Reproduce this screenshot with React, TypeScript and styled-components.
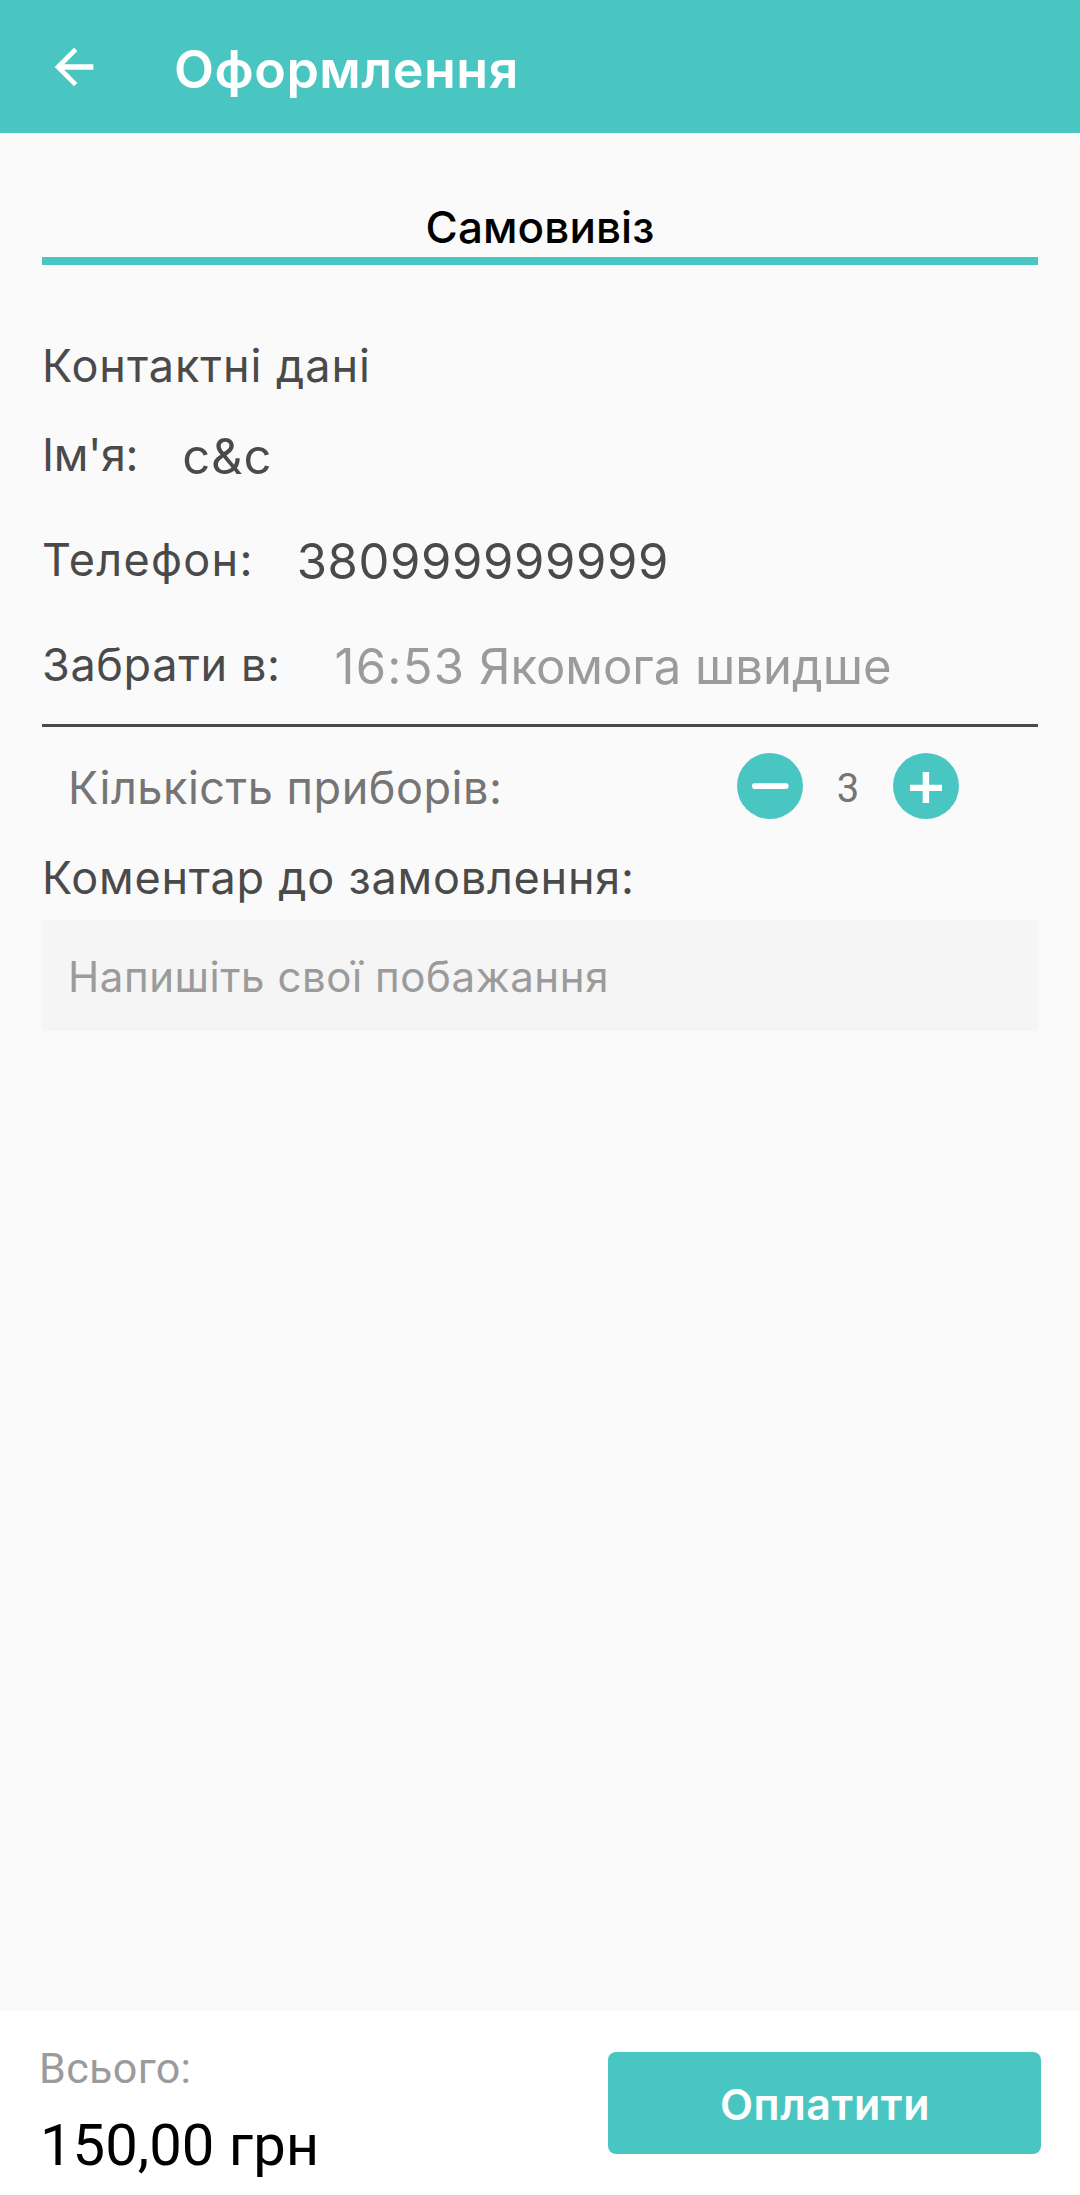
import React, { useState } from 'react';
import styled, { createGlobalStyle } from 'styled-components';

const TEAL = '#4ac6c2';
const INK = '#4a4a4a';
const MUTED = '#9b9b9b';

const GlobalStyle = createGlobalStyle`
  * { box-sizing: border-box; }
  body {
    margin: 0;
    background: #fafafa;
    font-family: Inter, 'Noto Sans', sans-serif;
  }
  button { font: inherit; border: 0; padding: 0; cursor: pointer; }
`;

const Screen = styled.div`
  display: flex;
  flex-direction: column;
  width: 1080px;
  height: 2195px;
  background: #fafafa;
`;

const Header = styled.header`
  display: flex;
  align-items: center;
  gap: 71px;
  height: 133px;
  padding-left: 45px;
  background: ${TEAL};
  color: #fff;
`;

const BackButton = styled.button`
  display: flex;
  width: 58px;
  height: 58px;
  background: none;
  color: #fff;
`;

const Title = styled.h1`
  margin: 0;
  padding-top: 7px;
  font-size: 52px;
  line-height: 64px;
  font-weight: 600;
  letter-spacing: 0.5px;
`;

const Main = styled.main`
  flex: 1;
  display: flex;
  flex-direction: column;
  padding: 0 42px;
`;

const Tab = styled.div`
  display: flex;
  align-items: flex-end;
  justify-content: center;
  height: 132px;
  border-bottom: 8px solid ${TEAL};
  color: #000;
  font-size: 44px;
  line-height: 60px;
  font-weight: 500;
  letter-spacing: 0.1px;
`;

const Heading = styled.h2<{ $top: number; $spacing: number }>`
  margin: ${p => p.$top}px 0 0;
  color: ${INK};
  font-size: 45px;
  line-height: 60px;
  font-weight: 400;
  letter-spacing: ${p => p.$spacing}px;
`;

const Fields = styled.div`
  margin-top: 8px;
  padding-bottom: 5px;
  border-bottom: 3px solid ${INK};
`;

const Field = styled.div<{ $gap: number }>`
  display: flex;
  align-items: center;
  gap: ${p => p.$gap}px;
  height: 105px;
  white-space: nowrap;
`;

const Label = styled.span<{ $spacing: number }>`
  padding-bottom: 3px;
  color: ${INK};
  font-size: 45px;
  line-height: 60px;
  letter-spacing: ${p => p.$spacing}px;
`;

const Value = styled.span<{ $spacing: number; $muted?: boolean }>`
  color: ${p => (p.$muted ? MUTED : INK)};
  font-size: 49px;
  line-height: 60px;
  letter-spacing: ${p => p.$spacing}px;
`;

const Time = styled.span`
  letter-spacing: 1.2px;
`;

const CutleryRow = styled.div`
  display: flex;
  align-items: center;
  justify-content: space-between;
  height: 118px;
  padding: 0 79px 0 26px;
`;

const CutleryLabel = styled.span`
  padding-top: 4px;
  color: #757575;
  font-size: 45px;
  line-height: 60px;
  letter-spacing: 0.53px;
`;

const Stepper = styled.div`
  display: flex;
  align-items: center;
`;

const RoundButton = styled.button`
  display: flex;
  width: 66px;
  height: 66px;
  border-radius: 50%;
  background: ${TEAL};
  color: #fff;
`;

const Count = styled.span`
  width: 90px;
  padding-top: 5px;
  text-align: center;
  color: #757575;
  font-family: Roboto, sans-serif;
  font-size: 40px;
  line-height: 50px;
`;

const CommentBox = styled.textarea`
  display: block;
  width: 100%;
  height: 111px;
  margin-top: 12px;
  padding: 27px 26px 24px;
  border: 0;
  border-radius: 0;
  resize: none;
  overflow: hidden;
  background: #f5f5f5;
  color: ${INK};
  font: 400 42px/60px Inter, 'Noto Sans', sans-serif;
  letter-spacing: 0.55px;
  &::placeholder { color: ${MUTED}; opacity: 1; }
`;

const Footer = styled.footer`
  display: flex;
  justify-content: space-between;
  align-items: flex-start;
  height: 184px;
  padding: 0 39px;
  background: #fff;
`;

const Totals = styled.div`
  display: flex;
  flex-direction: column;
  gap: 17px;
  padding-top: 32px;
  font-family: Roboto, sans-serif;
`;

const TotalLabel = styled.span`
  color: ${MUTED};
  font-size: 43px;
  line-height: 50px;
  letter-spacing: 0.38px;
`;

const TotalAmount = styled.span`
  padding-left: 1px;
  color: #000;
  font-size: 58px;
  line-height: 70px;
`;

const PayButton = styled.button`
  && { padding: 2px 0 0 1px; }
  width: 433px;
  height: 102px;
  margin-top: 41px;
  border-radius: 8px;
  background: ${TEAL};
  color: #fff;
  font-size: 43px;
  line-height: 60px;
  font-weight: 600;
  letter-spacing: 0.6px;
`;

const ArrowBack = () => (
  <svg width="58" height="58" viewBox="0 0 24 24" fill="currentColor">
    <path d="M20 10.9H7.93l5.49-5.49L12 4l-8 8 8 8 1.41-1.41L7.93 13.1H20z" />
  </svg>
);

const Minus = () => (
  <svg width="66" height="66" viewBox="0 0 66 66" fill="currentColor">
    <rect x="15" y="30.2" width="36.6" height="5.8" rx="2.4" />
  </svg>
);

const Plus = () => (
  <svg width="66" height="66" viewBox="0 0 66 66" fill="currentColor">
    <path d="M29.7 19h6.4v12.7H49V38H36.1v12h-6.4V38H17v-6.3h12.7z" />
  </svg>
);

export default function App() {
  const [count, setCount] = useState(3);
  return (
    <>
      <GlobalStyle />
      <Screen>
        <Header>
          <BackButton aria-label="Назад"><ArrowBack /></BackButton>
          <Title>Оформлення</Title>
        </Header>
        <Main>
          <Tab>Самовивіз</Tab>
          <Heading $top={71} $spacing={0.95}>Контактні дані</Heading>
          <Fields>
            <Field $gap={44}>
              <Label $spacing={-0.4}>Ім'я:</Label>
              <Value $spacing={0.9}>c&amp;c</Value>
            </Field>
            <Field $gap={43}>
              <Label $spacing={1.28}>Телефон:</Label>
              <Value $spacing={0.6}>380999999999</Value>
            </Field>
            <Field $gap={54}>
              <Label $spacing={0.63}>Забрати в:</Label>
              <Value $spacing={0} $muted><Time>16:53</Time> Якомога швидше</Value>
            </Field>
          </Fields>
          <CutleryRow>
            <CutleryLabel>Кількість приборів:</CutleryLabel>
            <Stepper>
              <RoundButton aria-label="Менше" onClick={() => setCount(c => Math.max(0, c - 1))}><Minus /></RoundButton>
              <Count>{count}</Count>
              <RoundButton aria-label="Більше" onClick={() => setCount(c => c + 1)}><Plus /></RoundButton>
            </Stepper>
          </CutleryRow>
          <Heading $top={3} $spacing={0.77}>Коментар до замовлення:</Heading>
          <CommentBox placeholder="Напишіть свої побажання" />
        </Main>
        <Footer>
          <Totals>
            <TotalLabel>Всього:</TotalLabel>
            <TotalAmount>150,00 грн</TotalAmount>
          </Totals>
          <PayButton>Оплатити</PayButton>
        </Footer>
      </Screen>
    </>
  );
}
